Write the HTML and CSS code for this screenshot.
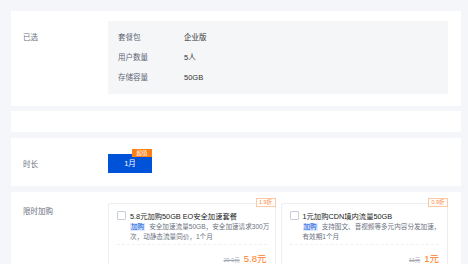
FILE: index.html
```html
<!DOCTYPE html>
<html>
<head>
	<meta charset="utf-8">
	<title>购买配置</title>
	<link rel="stylesheet" href="styles.css">
</head>
<body>
	<div class="page">
		<div class="card card-selected">
			<div class="label label-top">已选</div>
			<div class="summary">
				<div class="row"><span class="key">套餐包</span><span class="val">企业版</span></div>
				<div class="row"><span class="key">用户数量</span><span class="val">5人</span></div>
				<div class="row"><span class="key">存储容量</span><span class="val">50GB</span></div>
			</div>
		</div>

		<div class="card card-empty"></div>

		<div class="card card-duration">
			<div class="label">时长</div>
			<div class="duration-btn">
				1月
				<span class="hot">超值</span>
			</div>
		</div>

		<div class="card card-addon">
			<div class="label label-addon">限时加购</div>
			<div class="addons">
				<div class="addon">
					<span class="discount">1.9折</span>
					<div class="addon-title">
						<span class="check"></span>
						<span>5.8元加购50GB EO安全加速套餐</span>
					</div>
					<div class="addon-desc"><span class="tag">加购</span>安全加速流量50GB，安全加速请求300万次，动静态流量同价，1个月</div>
					<div class="addon-price">
						<span class="old">29.9元</span>
						<span class="now">5.8元</span>
					</div>
				</div>
				<div class="addon">
					<span class="discount">0.9折</span>
					<div class="addon-title">
						<span class="check"></span>
						<span>1元加购CDN境内流量50GB</span>
					</div>
					<div class="addon-desc"><span class="tag">加购</span>支持图文、音视频等多元内容分发加速，有效期1个月</div>
					<div class="addon-price">
						<span class="old">11元</span>
						<span class="now">1元</span>
					</div>
				</div>
			</div>
		</div>
	</div>
</body>
</html>
```

FILE: styles.css
```css
body{
	margin: 0;
	padding: 0;
	background: #f5f6f9;
	font-family: "Liberation Sans", "Noto Sans CJK SC", sans-serif;
	color: #333;
	overflow: hidden;
}
.page{
	padding: 11px 7px 0 11px;
}
.card{
	display: flex;
	background: #fff;
	padding: 0 13px 0 12px;
	margin-bottom: 6px;
}
.label{
	width: 85px;
	flex-shrink: 0;
	font-size: 7.5px;
	color: #6b7280;
}

/* selected plan */
.card-selected{
	padding-top: 10px;
	padding-bottom: 12px;
	margin-bottom: 5px;
}
.label-top{
	padding-top: 7px;
	line-height: 20px;
}
.summary{
	flex: 1;
	background: #f5f6f8;
	padding: 7px 10px 6px;
}
.row{
	display: flex;
	line-height: 20px;
	font-size: 7.5px;
}
.key{
	width: 66px;
	color: #5f6675;
}
.val{
	color: #333;
}

.card-empty{
	height: 21px;
}

/* duration */
.card-duration{
	align-items: center;
	padding-top: 16px;
	padding-bottom: 13px;
}
.duration-btn{
	position: relative;
	width: 44px;
	height: 19px;
	line-height: 19px;
	text-align: center;
	background: #0052d9;
	color: #fff;
	font-size: 7.5px;
}
.hot{
	position: absolute;
	top: -5px;
	right: 0;
	width: 20px;
	height: 8px;
	line-height: 8px;
	background: #ff7f17;
	color: #fff;
	font-size: 5.5px;
	text-align: center;
}

/* add-ons */
.card-addon{
	padding-top: 11px;
	padding-bottom: 20px;
}
.label-addon{
	padding-top: 4px;
	line-height: 10px;
}
.addons{
	flex: 1;
	display: grid;
	grid-template-columns: 1fr 1fr;
	gap: 5px;
}
.addon{
	position: relative;
	border: 1px solid #eceef2;
	border-radius: 2px;
	padding: 7px 3px 8px 8px;
}
.discount{
	position: absolute;
	top: -6px;
	right: -1px;
	width: 18px;
	height: 7px;
	line-height: 7px;
	border: 1px solid #ffc8a1;
	background: #fff;
	color: #ff8a3d;
	font-size: 5.5px;
	text-align: center;
}
.addon-title{
	display: flex;
	align-items: center;
	gap: 4px;
	height: 9px;
	font-size: 7.3px;
	color: #222;
}
.check{
	width: 7px;
	height: 7px;
	border: 1px solid #c9ced6;
	border-radius: 1px;
	flex-shrink: 0;
}
.addon-desc{
	margin-top: 2px;
	padding-left: 13px;
	font-size: 6.6px;
	line-height: 9.5px;
	color: #6b7280;
}
.tag{
	display: inline-block;
	line-height: 8px;
	margin-right: 4px;
	background: #dfe9ff;
	color: #0052d9;
	padding: 0 1px;
}
.addon-price{
	margin-top: 3px;
	margin-right: 5px;
	padding-top: 6px;
	border-top: 1px dashed #eef0f3;
	display: flex;
	justify-content: flex-end;
	align-items: baseline;
	gap: 4px;
}
.old{
	font-size: 5.5px;
	color: #a3a8b3;
	text-decoration: line-through;
}
.now{
	font-size: 9.5px;
	color: #ff7a1a;
}
```
